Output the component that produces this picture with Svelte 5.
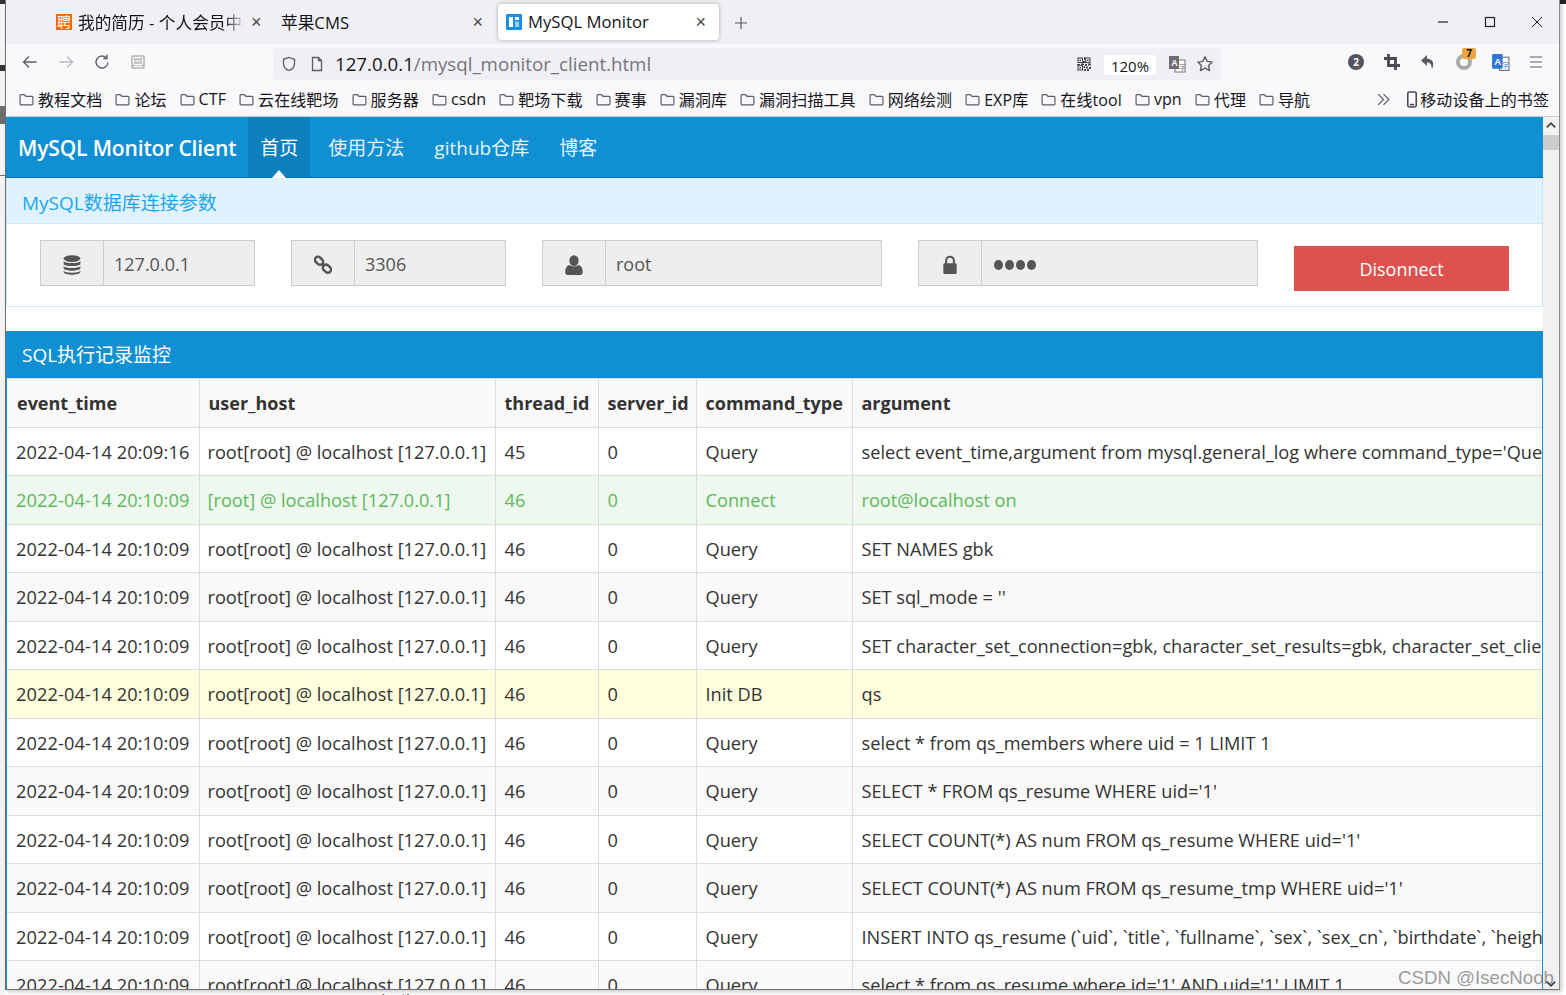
<script>
  const bookmarks = ['教程文档','论坛','CTF','云在线靶场','服务器','csdn','靶场下载','赛事','漏洞库','漏洞扫描工具','网络绘测','EXP库','在线tool','vpn','代理','导航'];
  const q = 'Query';
  const host = 'root[root] @ localhost [127.0.0.1]';
  const t = '2022-04-14 20:10:09';
  const rows = [
    ['2022-04-14 20:09:16',host,'45','0',q,"select event_time,argument from mysql.general_log where command_type='Query' and thread_id != 45",''],
    [t,'[root] @ localhost [127.0.0.1]','46','0','Connect','root@localhost on','ok'],
    [t,host,'46','0',q,'SET NAMES gbk',''],
    [t,host,'46','0',q,"SET sql_mode = ''",''],
    [t,host,'46','0',q,'SET character_set_connection=gbk, character_set_results=gbk, character_set_client=binary',''],
    [t,host,'46','0','Init DB','qs','warn'],
    [t,host,'46','0',q,'select * from qs_members where uid = 1 LIMIT 1',''],
    [t,host,'46','0',q,"SELECT * FROM qs_resume WHERE uid='1'",''],
    [t,host,'46','0',q,"SELECT COUNT(*) AS num FROM qs_resume WHERE uid='1'",''],
    [t,host,'46','0',q,"SELECT COUNT(*) AS num FROM qs_resume_tmp WHERE uid='1'",''],
    [t,host,'46','0',q,'INSERT INTO qs_resume (`uid`, `title`, `fullname`, `sex`, `sex_cn`, `birthdate`, `height`, `marriage`)',''],
    [t,host,'46','0',q,"select * from qs_resume where id='1' AND uid='1' LIMIT 1",'']
  ];
  const heads = ['event_time','user_host','thread_id','server_id','command_type','argument'];
</script>

<div class="desk">
  <div class="edge">
    <span class="e1"></span><span class="e2"></span><span class="e3"></span><span class="e4"></span>
  </div>
  <span class="corner"></span>
  <div class="window">
    <div class="tabbar">
      <div class="tab t1">
        <span class="fav1">聘</span><span class="tabtext fade">我的简历 - 个人会员中心</span>
        <span class="x">×</span>
      </div>
      <div class="tab t2"><span class="tabtext">苹果CMS</span><span class="x">×</span></div>
      <div class="tab t3">
        <svg class="fav3" viewBox="0 0 16 16"><rect width="16" height="16" rx="1" fill="#1a8fe3"/><rect x="3" y="3" width="4" height="10" fill="#fff"/><rect x="9" y="3" width="4" height="3" fill="#fff"/><rect x="9" y="7.500" width="4" height="5.500" fill="#8fd0f8"/></svg>
        <span class="tabtext">MySQL Monitor</span><span class="x">×</span>
      </div>
      <svg class="plus" viewBox="0 0 14 14"><path d="M7 1v12M1 7h12" stroke="#5b5b66" stroke-width="1.200"/></svg>
      <div class="winbtns">
        <svg viewBox="0 0 12 12"><path d="M1 6h10" stroke="#222" stroke-width="1.200"/></svg>
        <svg viewBox="0 0 12 12"><rect x="1.500" y="1.500" width="9" height="9" fill="none" stroke="#222" stroke-width="1.200"/></svg>
        <svg viewBox="0 0 12 12"><path d="M1 1l10 10M11 1L1 11" stroke="#222" stroke-width="1"/></svg>
      </div>
    </div>

    <div class="toolbar">
      <div class="navicons">
        <svg viewBox="0 0 16 16"><path d="M14.500 8H1.500M7 2.500L1.500 8 7 13.500" fill="none" stroke="#5b5b66" stroke-width="1.300"/></svg>
        <svg viewBox="0 0 16 16"><path d="M1.500 8h13M9 2.500L14.500 8 9 13.500" fill="none" stroke="#b9b9c0" stroke-width="1.300"/></svg>
        <svg viewBox="0 0 16 16"><path d="M14 8.500A6 6 0 1 1 12 3.500M13 .8v3.700H9.300" fill="none" stroke="#5b5b66" stroke-width="1.400"/></svg>
        <svg viewBox="0 0 16 16"><rect x="1" y="1" width="14" height="14" rx="2" fill="#c4c4c6"/><rect x="3.500" y="3.500" width="9" height="7" rx="1" fill="none" stroke="#fff" stroke-width="1"/><path d="M5.500 7h5M4 12.500h8" stroke="#fff"/></svg>
      </div>
      <div class="urlbar">
        <svg class="shield" viewBox="0 0 16 16"><path d="M8 1.500l5.500 1.800v4.200c0 3.500-2.500 6-5.500 7-3-1-5.500-3.500-5.500-7V3.300z" fill="none" stroke="#5b5b66" stroke-width="1.300"/></svg>
        <svg class="page" viewBox="0 0 16 16"><path d="M3.500 1.500h6l3 3v10h-9zM9.500 1.500v3h3" fill="none" stroke="#5b5b66" stroke-width="1.300"/></svg>
        <span class="url"><b>127.0.0.1</b>/mysql_monitor_client.html</span>
        <svg class="qr" viewBox="0 0 14 14"><g fill="none" stroke="#4a4a4f" stroke-width="1.100"><rect x="1" y="1" width="4.500" height="4.500"/><rect x="8.500" y="1" width="4.500" height="4.500"/><rect x="1" y="8.500" width="4.500" height="4.500"/></g><path d="M2.500 2.500h1.500v1.500h-1.500zM10 2.500h1.500v1.500H10zM2.500 10h1.500v1.500h-1.500zM7 0h1v3H7zM6 4h2v2H6zM0 7h3v1H0zM4 6.500h3v1.500H4zM8 7h2v2H8zM11 6.500h3v2h-3zM6.500 9h1.500v2H6.500zM9 9.500h2v2H9zM12 10h2v2h-2zM7 12h2v2H7zM10 12h2v2h-2z" fill="#4a4a4f"/></svg>
        <span class="zoom">120%</span>
        <svg class="trans" viewBox="0 0 18 18"><rect x="7" y="5" width="10" height="12" fill="#fff" stroke="#777"/><rect x="1" y="1" width="10" height="13" fill="#6d6d70"/><text x="3.200" y="11" class="tt">A</text><text x="11" y="14.500" class="tt2">字</text></svg>
        <svg class="star" viewBox="0 0 18 18"><path d="M9 1.800l2.200 4.600 5 .7-3.600 3.500.9 5L9 13.200l-4.500 2.400.9-5L1.800 7.100l5-.7z" fill="none" stroke="#5b5b66" stroke-width="1.400" stroke-linejoin="round"/></svg>
      </div>
      <div class="exts">
        <span class="badge2">2</span>
        <svg viewBox="0 0 16 16"><path d="M4.500 0v11.500H16M0 4.500h11.500V16" fill="none" stroke="#4a4a55" stroke-width="2.800"/></svg>
        <svg viewBox="0 0 16 16"><path d="M7 1L1 6.500 7 12V8.500c3 0 4.500 1.500 5 6.500 2.500-4.500 1.500-10-5-10.500z" fill="#5b5b66"/></svg>
        <span class="ring"><i>7</i></span>
        <svg class="ab" viewBox="0 0 18 18"><rect x="8" y="4" width="9" height="12.500" fill="#fff" stroke="#666"/><rect x="1" y="1" width="10" height="14" rx="1" fill="#2f76d6"/><text x="3" y="11.500" class="tt">A</text><text x="11" y="14" class="tt3">字</text></svg>
        <svg viewBox="0 0 16 16"><path d="M2 3h12M2 8h12M2 13h12" stroke="#5b5b66" stroke-width="1.200"/></svg>
      </div>
    </div>

    <div class="bookmarks">
      {#each bookmarks as b}
        <span class="bm">
          <svg viewBox="0 0 14 14"><path d="M1 3.500a1 1 0 0 1 1-1h3l1.500 1.500H12a1 1 0 0 1 1 1v6a1 1 0 0 1-1 1H2a1 1 0 0 1-1-1z" fill="none" stroke="#5b5b66" stroke-width="1.100"/></svg>{b}
        </span>
      {/each}
      <span class="more">
        <svg viewBox="0 0 14 14"><path d="M2 2l5 5-5 5M7 2l5 5-5 5" fill="none" stroke="#5b5b66" stroke-width="1.100"/></svg>
      </span>
      <span class="mobile">
        <svg viewBox="0 0 10 16"><rect x="1" y="1" width="8" height="14" rx="1.500" fill="none" stroke="#4a4a55" stroke-width="1.500"/><path d="M3 12.800h4" stroke="#4a4a55" stroke-width="1.500"/></svg>移动设备上的书签
      </span>
    </div>

    <div class="viewport">
      <div class="page-body">
        <nav class="navbar">
          <span class="brand">MySQL Monitor Client</span>
          <div class="navitems">
            <span class="item active">首页</span>
            <span class="item">使用方法</span>
            <span class="item">github仓库</span>
            <span class="item">博客</span>
          </div>
        </nav>

        <section class="conn">
          <h3>MySQL数据库连接参数</h3>
          <div class="form">
            <div class="group short">
              <span class="addon"><svg viewBox="0 0 16 18"><g fill="#555"><ellipse cx="8" cy="3.200" rx="7.500" ry="3"/><path d="M.5 5.300C1.500 7.800 14.500 7.800 15.500 5.300v2.700C14.500 10.500 1.500 10.500.5 8zM.5 9.800C1.500 12.300 14.500 12.300 15.500 9.800v2.400C14.500 14.800 1.500 14.800.5 12.200zM.5 14.200C1.500 16.600 14.500 16.600 15.500 14.200v1C14.500 18.500 1.500 18.500.5 15.200z"/></g></svg></span>
              <span class="val">127.0.0.1</span>
            </div>
            <div class="group short">
              <span class="addon"><svg viewBox="0 0 16 16"><g fill="none" stroke="#555" stroke-width="2.200"><rect x="0.500" y="1.500" width="8" height="5.500" rx="2.700" transform="rotate(45 4.500 4.200)"/><rect x="7.500" y="8.500" width="8" height="5.500" rx="2.700" transform="rotate(45 11.500 11.200)"/><path d="M6.500 6.500l3 3"/></g></svg></span>
              <span class="val">3306</span>
            </div>
            <div class="group long">
              <span class="addon"><svg viewBox="0 0 14 16"><g fill="#555"><ellipse cx="7" cy="4.500" rx="3.700" ry="4.300"/><path d="M0 14c0-4 1.500-5.500 3.500-6 1 1.500 6 1.500 7 0 2 .5 3.500 2 3.500 6 0 1-1 2-2 2H2c-1 0-2-1-2-2z"/></g></svg></span>
              <span class="val">root</span>
            </div>
            <div class="group long">
              <span class="addon"><svg viewBox="0 0 14 18"><path d="M3.500 8V5a3.500 3.500 0 0 1 7 0v3" fill="none" stroke="#555" stroke-width="1.800"/><rect x="1" y="7.500" width="12" height="9.500" rx="1" fill="#555"/></svg></span>
              <span class="val dots"><i></i><i></i><i></i><i></i></span>
            </div>
            <button class="disconnect">Disonnect</button>
          </div>
        </section>

        <section class="log">
          <h3>SQL执行记录监控</h3>
          <table>
            <colgroup><col class="c1"/><col class="c2"/><col class="c3"/><col class="c4"/><col class="c5"/><col/></colgroup>
            <thead><tr>{#each heads as h}<th>{h}</th>{/each}</tr></thead>
            <tbody>
              {#each rows as r, i}
                <tr class="{r[6]} {i % 2 === 1 ? 'odd' : ''}">
                  {#each r.slice(0, 6) as c}<td>{c}</td>{/each}
                </tr>
              {/each}
            </tbody>
          </table>
        </section>
      </div>
      <div class="scrollbar">
        <svg class="up" viewBox="0 0 10 8"><path d="M1.500 6L5 2.500 8.500 6" fill="none" stroke="#444" stroke-width="1.500"/></svg>
        <span class="thumb"></span>
        <svg class="down" viewBox="0 0 10 8"><path d="M1.500 2L5 5.500 8.500 2" fill="none" stroke="#444" stroke-width="1.500"/></svg>
      </div>
    </div>
    <span class="mark">CSDN @IsecNoob</span>
  </div>
  <span class="behind">报告</span>
</div>

<style>
  :global(body) { margin: 0; background: #fff; }
  .desk {
    position: relative;
    width: 1566px;
    height: 995px;
    overflow: hidden;
    background: #fff;
    font-family: "Open Sans", "Noto Sans CJK SC", sans-serif;
    color: #333;
  }
  .edge { position: absolute; left: 0; top: 0; width: 5px; height: 995px; background: #f4f4f4; }
  .edge span { position: absolute; left: 0; width: 5px; background: #333; }
  .e1 { top: 0; height: 4px; }
  .e2 { top: 65px; height: 6px; }
  .e3 { top: 106px; height: 18px; opacity: .7; }
  .e4 { top: 175px; height: 1px; opacity: .7; }
  .corner { position: absolute; right: 0; top: 0; width: 6px; height: 4px; background: #222; }
  .window {
    position: absolute;
    left: 5px;
    top: 0;
    width: 1555px;
    height: 990px;
    display: flex;
    flex-direction: column;
    background: #fff;
    border-right: 1px solid #8a8a8a;
    border-bottom: 1px solid #707070;
    border-left: 1px solid #707070;
    box-sizing: border-box;
    box-shadow: 2px 2px 4px rgba(0,0,0,.2);
  }
  .tabbar {
    height: 44px;
    flex: none;
    background: #f0f0f4;
    display: flex;
    align-items: center;
    position: relative;
    font-size: 16.700px;
    color: #15141a;
  }
  .tab { display: flex; align-items: center; height: 36px; box-sizing: border-box; flex: none; }
  .t1 { width: 203px; margin-left: 50px; gap: 6px; }
  .t2 { width: 222px; padding-left: 15px; justify-content: space-between; padding-right: 5px; margin-left: 7px; }
  .t3 { width: 221px; margin-left: 10px; background: #fff; border-radius: 4px; box-shadow: 0 0 4px rgba(0,0,0,.3); padding: 0 13px 0 8px; gap: 6px; }
  .t3 .tabtext { margin-top: -2px; }
  .fav1 { width: 16px; height: 16px; background: #f56a00; color: #fff; font-size: 14px; line-height: 16px; text-align: center; flex: none; }
  .fav3 { width: 16px; height: 16px; flex: none; }
  .tabtext { white-space: nowrap; overflow: hidden; flex: 0 1 auto; }
  .fade {
    width: 167px;
    flex: none;
    -webkit-mask-image: linear-gradient(90deg, #000 88%, transparent 100%);
    mask-image: linear-gradient(90deg, #000 88%, transparent 100%);
  }
  .x { font-size: 18px; line-height: 1; color: #444; font-family: "Liberation Sans", sans-serif; margin-left: auto; }
  .plus { width: 14px; height: 14px; margin-left: 15px; margin-top: 1px; }
  .winbtns { margin-left: auto; display: flex; gap: 35px; padding-right: 16px; }
  .winbtns svg { width: 12px; height: 12px; display: block; }
  .toolbar {
    height: 36px;
    flex: none;
    background: #f9f9fb;
    display: flex;
    align-items: center;
    padding: 0 0 0 16px;
  }
  .navicons { display: flex; gap: 20px; width: 251px; flex: none; }
  .navicons svg { width: 16px; height: 16px; }
  .urlbar {
    width: 948px;
    height: 32px;
    flex: none;
    margin-top: 4px;
    background: #f0f0f4;
    border-radius: 4px;
    display: flex;
    align-items: center;
    padding-left: 8px;
    box-sizing: border-box;
  }
  .shield { width: 16px; height: 16px; }
  .page { width: 16px; height: 16px; margin-left: 12px; }
  .url { font-size: 18.700px; color: #75757e; margin: -2px 0 0 10px; white-space: nowrap; }
  .url b { font-weight: 400; color: #15141a; }
  .qr { width: 14px; height: 14px; margin-left: auto; }
  .zoom {
    background: #fff;
    width: 52px;
    height: 20px;
    margin: 2px 12px 0 13px;
    border-radius: 3px;
    font-size: 15px;
    line-height: 22px;
    text-align: center;
    overflow: hidden;
    color: #15141a;
  }
  .trans { width: 18px; height: 18px; }
  .star { width: 18px; height: 18px; margin: 0 7px 0 10px; }
  .tt { font: 700 9px "Liberation Sans", sans-serif; fill: #fff; }
  .tt2 { font: 7px "Noto Sans CJK SC", sans-serif; fill: #777; }
  .tt3 { font: 6px "Noto Sans CJK SC", sans-serif; fill: #2f76d6; }
  .exts {
    display: grid;
    grid-auto-flow: column;
    grid-auto-columns: 36px;
    justify-items: center;
    align-items: center;
    margin-left: 117px;
  }
  .exts svg { width: 16px; height: 16px; }
  .exts svg.ab { width: 19px; height: 19px; }
  .badge2 {
    width: 16px; height: 16px; border-radius: 50%;
    background: #55555f; color: #fff;
    font: 700 10px/16px "Open Sans", sans-serif; text-align: center;
  }
  .ring {
    position: relative; width: 16px; height: 16px; box-sizing: border-box;
    border: 4px solid #ababab; border-radius: 50%;
  }
  .ring i {
    position: absolute; left: 2px; top: -10px;
    width: 14px; height: 11px; background: #eba63f; border-radius: 2px;
    font: 700 10px/11px "Open Sans", sans-serif; color: #111; text-align: center;
  }
  .bookmarks {
    flex: none;
    background: #f9f9fb;
    border-bottom: 1px solid #ccc;
    display: flex;
    align-items: center;
    gap: 13px;
    padding-left: 13px;
    padding-top: 2px;
    font-size: 16px;
    letter-spacing: .1px;
    color: #15141a;
    white-space: nowrap;
    box-sizing: border-box;
    height: 37px;
  }
  .bm { display: flex; align-items: center; gap: 4px; }
  .bm svg { width: 15px; height: 15px; flex: none; }
  .more { margin-left: 53px; display: flex; }
  .more svg { width: 15px; height: 15px; }
  .mobile { display: flex; align-items: center; gap: 2px; margin-left: 2px; }
  .mobile svg { width: 12px; height: 17px; }
  .viewport { flex: 1; min-height: 0; display: flex; overflow: hidden; }
  .page-body { width: 1537px; flex: none; overflow: hidden; }
  .navbar {
    height: 60px;
    background: #1090d3;
    border-bottom: 1px solid #0b6fa5;
    display: flex;
    align-items: center;
    padding-left: 12px;
    color: #fff;
  }
  .brand { font-size: 21px; font-weight: 600; letter-spacing: -.15px; margin: 2px 12px 0 0; white-space: nowrap; }
  .navitems { display: flex; gap: 6px; height: 100%; }
  .item {
    padding: 0 12px;
    font-size: 19px;
    display: flex;
    align-items: center;
    color: #e4f3fb;
    position: relative;
    white-space: nowrap;
  }
  .active { background: #0e7fbd; color: #fff; }
  .active::after {
    content: "";
    position: absolute;
    left: 50%;
    bottom: -1px;
    margin-left: -7px;
    border: solid transparent;
    border-width: 0 7px 8px;
    border-bottom-color: #fff;
  }
  .conn {
    border: 1px solid #cfe6f4;
    border-top: 0;
    height: 129px;
    box-sizing: border-box;
  }
  .conn h3 {
    margin: 0;
    height: 46px;
    background: #dff2fe;
    border-bottom: 1px solid #cfe6f4;
    box-sizing: border-box;
    font-size: 19px;
    font-weight: 400;
    line-height: 50px;
    padding-left: 15px;
    color: #1ea5ee;
  }
  .form { display: flex; gap: 36px; padding: 16px 0 0 33px; align-items: flex-start; }
  .group {
    display: flex;
    height: 46px;
    background: #eee;
    border: 1px solid #ccc;
    box-sizing: border-box;
    flex: none;
  }
  .short { width: 215px; }
  .long { width: 340px; }
  .addon {
    width: 63px;
    flex: none;
    border-right: 1px solid #ccc;
    box-sizing: border-box;
    display: flex;
    align-items: center;
    justify-content: center;
    padding-top: 4px;
  }
  .addon svg { width: 18px; height: 20px; }
  .val { padding-left: 10px; font-size: 18px; line-height: 47px; color: #555; }
  .dots { display: flex; align-items: center; gap: 2px; padding-left: 12px; padding-top: 4px; }
  .dots i { width: 9px; height: 10px; border-radius: 50%; background: #555; }
  .disconnect {
    width: 215px;
    height: 45px;
    margin-top: 6px;
    flex: none;
    background: #dd524e;
    border: 0;
    color: #fff;
    font: 400 18px "Open Sans", sans-serif;
    padding: 1px 0 0;
  }
  .log { margin-top: 24px; border-left: 1px solid #1090d3; border-right: 1px solid #1090d3; }
  .log h3 {
    margin: 0 -1px;
    height: 47px;
    background: #1090d3;
    color: #fff;
    font-size: 19px;
    font-weight: 400;
    line-height: 49px;
    padding-left: 16px;
  }
  table {
    width: 1535px;
    table-layout: fixed;
    border-collapse: collapse;
    font-size: 18.200px;
    color: #333;
  }
  .c1 { width: 192px; }
  .c2 { width: 296px; }
  .c3 { width: 103px; }
  .c4 { width: 98px; }
  .c5 { width: 156px; }
  th, td {
    height: 48.500px;
    box-sizing: border-box;
    padding: 1px 8px 0 9px;
    border: 1px solid #ddd;
    white-space: nowrap;
    overflow: hidden;
    text-align: left;
  }
  td:first-child { letter-spacing: .1px; }
  td:nth-child(2) { padding-left: 8px; }
  tr > :first-child { border-left: 0; }
  tr > :last-child { border-right: 0; }
  th { font-weight: 700; font-size: 18px; background: #f9f9f9; padding-top: 0; }
  th:first-child { padding-left: 10px; }
  .odd td { background: #f9f9f9; }
  .ok td { background: #eff8ef; color: #5cb85c; }
  .warn td { background: #ffffdd; }
  .scrollbar { flex: 1; background: #f1f1f1; position: relative; }
  .up, .down { position: absolute; left: 2px; width: 12px; height: 10px; }
  .up { top: 3px; }
  .down { bottom: 0; }
  .thumb { position: absolute; left: 0; right: 0; top: 18px; height: 15px; background: #cdcdcd; }
  .mark {
    position: absolute;
    right: 5px;
    bottom: 0;
    font: 18.700px "Liberation Sans", sans-serif;
    color: rgba(90,90,90,.6);
    white-space: nowrap;
  }
  .behind {
    position: absolute;
    left: 379px;
    top: 989px;
    font-size: 19px;
    color: #222;
  }
</style>
